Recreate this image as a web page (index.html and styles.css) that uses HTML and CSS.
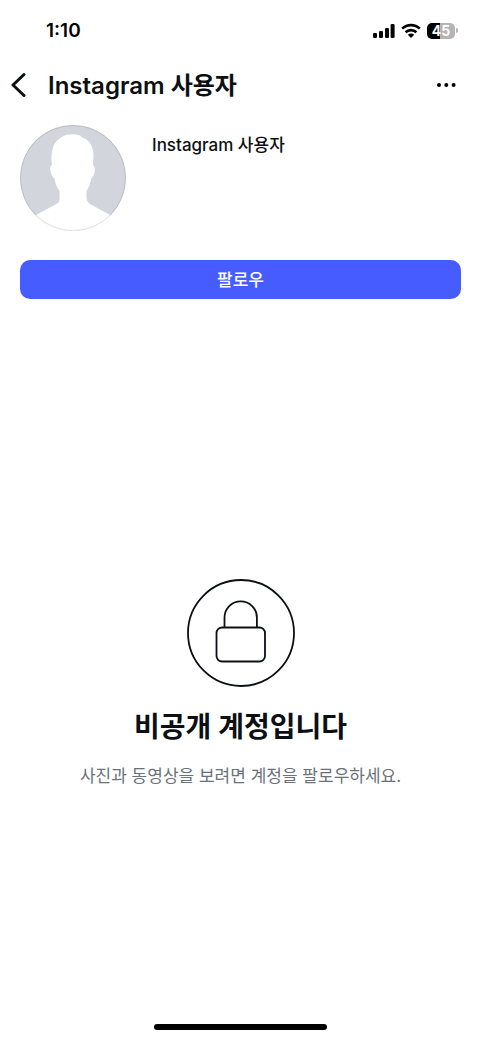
FILE: index.html
```html
<!DOCTYPE html>
<html lang="ko">
<head>
<meta charset="utf-8">
<meta name="viewport" content="width=device-width, initial-scale=1">
<title>Instagram 사용자</title>
<link rel="stylesheet" href="styles.css">
</head>
<body>
<div class="screen">
  <div class="status">
    <time class="clock">1:10</time>
    <div class="indicators">
      <svg class="signal" width="22" height="16" viewBox="0 0 22 16" aria-hidden="true">
        <rect x="0" y="10" width="4" height="5" rx="1.2"/>
        <rect x="6" y="8" width="4" height="7" rx="1.2"/>
        <rect x="12" y="5" width="4" height="10" rx="1.2"/>
        <rect x="17.6" y="1" width="4" height="14" rx="1.2"/>
      </svg>
      <svg class="wifi" width="20" height="16" viewBox="0 0 20 16" aria-hidden="true">
        <path d="M1.2 5.6C6.2 .9 13.8 .9 18.8 5.6M4.600 9.300C7.700 6.400 12.300 6.400 15.400 9.300" fill="none" stroke="#000" stroke-width="2.6"/>
        <path d="M10 15L6.800 11.800C8.600 10.200 11.400 10.200 13.200 11.800Z"/>
      </svg>
      <div class="battery"><span class="level">45</span></div>
    </div>
  </div>
  <header class="topbar">
    <button class="icon-btn" type="button" aria-label="뒤로">
      <svg width="16" height="26" viewBox="0 0 16 26"><path d="M14 2.5L3 13L14 23.5" fill="none" stroke="#0c1014" stroke-width="3" stroke-linecap="round" stroke-linejoin="round"/></svg>
    </button>
    <h1 class="title">Instagram 사용자</h1>
    <button class="icon-btn" type="button" aria-label="옵션 더 보기">
      <svg width="20" height="6" viewBox="0 0 20 6"><circle cx="3" cy="3" r="2"/><circle cx="10.3" cy="3" r="2"/><circle cx="17.6" cy="3" r="2"/></svg>
    </button>
  </header>
  <main class="content">
    <section class="profile">
      <svg class="avatar" viewBox="0 0 106 106" role="img" aria-label="프로필 사진">
        <defs><clipPath id="disc"><circle cx="53" cy="53" r="53"/></clipPath></defs>
        <g clip-path="url(#disc)">
          <rect width="106" height="106" fill="#d2d6dc"/>
          <path d="M15 90.500L36.500 79Q39.500 77.500 39.600 74V66C37 63 35.500 59 34.500 53.500C31 51 29.500 45 30.500 41L32 40C31 33 31.500 24 35 18C40 10.500 51 7 60 10.500L63 13C71 15 73.500 24 73.500 30L73 40C76 43 75.500 50 71.500 53C70.500 58 69 62 66.500 66V73Q66.600 76.500 69 78.500L91 90.500L106 106H0Z" fill="#fff"/>
        </g>
        <circle cx="53" cy="53" r="52.500" fill="none" stroke="#0000001c"/>
      </svg>
      <p class="name">Instagram 사용자</p>
    </section>
    <button class="follow" type="button">팔로우</button>
    <section class="private">
      <svg class="lock" viewBox="0 0 108 108" aria-hidden="true">
        <g fill="none" stroke="#0c1014" stroke-width="1.800">
          <circle cx="54" cy="54" r="53"/>
          <rect x="29.500" y="48.500" width="48.500" height="34" rx="5.500"/>
          <path d="M37.500 48.500V38.500A16.200 16.200 0 0 1 69.900 38.500V48.500"/>
        </g>
      </svg>
      <h2 class="heading">비공개 계정입니다</h2>
      <p class="hint">사진과 동영상을 보려면 계정을 팔로우하세요.</p>
    </section>
  </main>
  <div class="home"></div>
</div>
</body>
</html>
```
FILE: styles.css
```css
* { box-sizing: border-box; }
body {
  margin: 0;
  background: #fff;
  color: #0c1014;
  font-family: Inter, "Noto Sans CJK KR", sans-serif;
}
h1, h2, p { margin: 0; }
button { border: 0; padding: 0; background: none; font-family: inherit; }
svg { display: block; flex: none; }
.screen { min-height: 100vh; display: flex; flex-direction: column; }
.status {
  height: 60px;
  padding: 2px 23px 0 46px;
  display: flex;
  align-items: center;
  justify-content: space-between;
  color: #000;
}
.clock { font-size: 19px; font-weight: 600; line-height: 24px; }
.indicators { display: flex; align-items: center; gap: 6px; }
.battery {
  position: relative;
  width: 28px;
  height: 16px;
  margin-right: 3px;
  border-radius: 5px;
  background: linear-gradient(90deg, #000 45%, #b4b4b4 45%);
  color: #fff;
  text-align: center;
}
.battery::after {
  content: "";
  position: absolute;
  left: 29px;
  top: 5px;
  width: 2px;
  height: 5px;
  border-radius: 0 2px 2px 0;
  background: #b4b4b4;
}
.level { display: block; font-size: 14px; font-weight: 700; line-height: 16px; }
.topbar {
  height: 50px;
  padding: 0 25px 0 10px;
  display: flex;
  align-items: center;
}
.title { flex: 1; padding: 1px 0 0 22px; font-size: 24px; font-weight: 600; line-height: 32px; }
.content { flex: 1; padding: 15px 20px 0; display: flex; flex-direction: column; }
.profile { display: flex; gap: 26px; }
.avatar { width: 106px; height: 106px; }
.name { padding-top: 8px; font-size: 17px; font-weight: 500; line-height: 24px; }
.follow {
  margin-top: 29px;
  height: 39px;
  border-radius: 10px;
  background: #465cff;
  color: #fff;
  font-size: 17px;
  font-weight: 500;
  line-height: 24px;
}
.private {
  flex: 1;
  padding-top: 44px;
  display: flex;
  flex-direction: column;
  align-items: center;
  justify-content: center;
  text-align: center;
}
.lock { width: 108px; height: 108px; }
.heading { margin-top: 20px; font-size: 28px; font-weight: 600; line-height: 40px; }
.hint { margin-top: 16px; font-size: 17px; line-height: 26px; color: #6a717a; }
.home {
  width: 36%;
  height: 6px;
  margin: 0 auto 10px;
  border-radius: 3px;
  background: #000;
}
```
